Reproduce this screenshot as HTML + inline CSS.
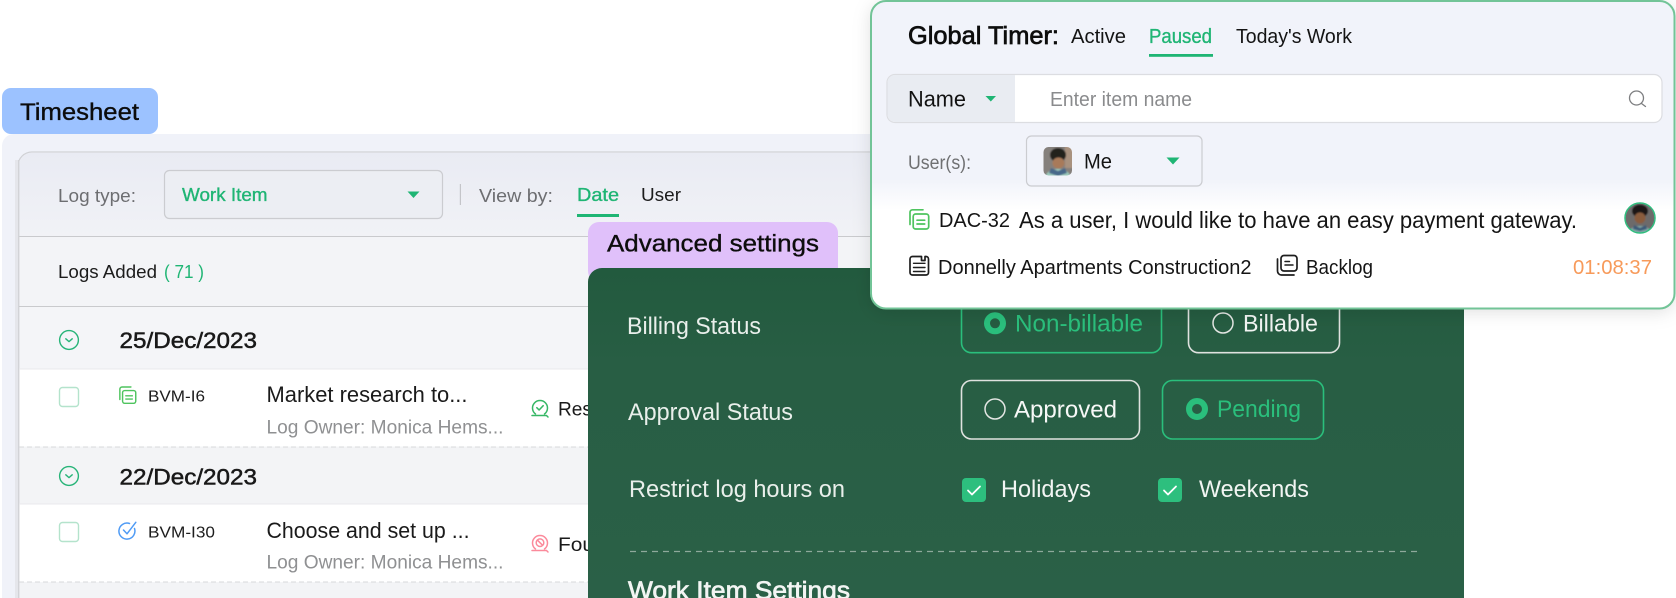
<!DOCTYPE html>
<html><head><meta charset="utf-8"><title>Timesheet</title>
<style>
html,body{margin:0;padding:0;background:#fff;width:1676px;height:598px;overflow:hidden}
svg{display:block}
text{font-family:"Liberation Sans",sans-serif;font-kerning:normal}
.m{stroke:currentColor;stroke-width:.35px}
.d{stroke:currentColor;stroke-width:.5px}
.b{stroke:currentColor;stroke-width:.7px}
</style></head><body>
<svg xmlns="http://www.w3.org/2000/svg" width="1676" height="598" viewBox="0 0 1676 598">
<defs>
<linearGradient id="hd" x1="0" y1="0" x2="0" y2="1"><stop offset="0" stop-color="#e9ebf3"/><stop offset="1" stop-color="#f1f2f6"/></linearGradient>
<linearGradient id="dk" x1="0" y1="0" x2="0" y2="1"><stop offset="0" stop-color="#225a3e"/><stop offset=".3" stop-color="#285e44"/><stop offset="1" stop-color="#2a6047"/></linearGradient>
<linearGradient id="tm" x1="0" y1="0" x2="0" y2="1"><stop offset="0" stop-color="#f1f3fa"/><stop offset=".58" stop-color="#f1f3fa"/><stop offset=".68" stop-color="#fff"/><stop offset="1" stop-color="#fff"/></linearGradient>
<filter id="sh" x="-5%" y="-10%" width="110%" height="125%"><feDropShadow dx="0" dy="3" stdDeviation="9" flood-color="#000" flood-opacity=".13"/></filter>
<filter id="bl"><feGaussianBlur stdDeviation=".7"/></filter>
<clipPath id="av1"><rect x="1043.500" y="147" width="28.500" height="28.500" rx="5"/></clipPath>
<clipPath id="av2"><circle cx="1640" cy="218" r="14.500"/></clipPath>
<g id="wi" fill="none" stroke="#4fc45f" stroke-width="1.700" stroke-linecap="round" stroke-linejoin="round"><rect x="4.200" y="5" width="15.500" height="15" rx="2.500"/><path d="M1 15.500V3.300A2.500 2.500 0 0 1 3.500 .8H14"/><path d="M8 11.200H15.700M8 15H15.700"/></g>
<g id="chev" fill="none" stroke="#27b478" stroke-width="1.400" stroke-linecap="round" stroke-linejoin="round"><circle cx="0" cy="0" r="9.400"/><path d="M-3.200-1.200 0 1.600 3.200-1.200"/></g>
</defs>

<rect width="1676" height="598" fill="#fff"/>

<!-- Timesheet card -->
<rect x="2" y="134" width="1400" height="500" rx="12" fill="#f0f2f9"/>
<rect x="18" y="152" width="1380" height="460" rx="14" fill="#f3f4f7" stroke="#d0d1d5" stroke-width="1.200"/>
<path d="M18.800 236.500V166a13.200 13.200 0 0 1 13.200-13.200H1390V236.500Z" fill="url(#hd)"/>
<path d="M18 236.500H1390" stroke="#c9cacd" stroke-width="1"/>
<rect x="15" y="160" width="3" height="438" fill="#e5e6eb"/>
<rect x="18" y="160" width="1.400" height="438" fill="#d2d3d7"/>
<text x="58" y="202" font-size="18.500" fill="#6d6e71" textLength="78" lengthAdjust="spacingAndGlyphs">Log type:</text>
<rect x="164.500" y="170.500" width="278" height="48" rx="5" fill="#eceef3" stroke="#cbccd0" stroke-width="1.200"/>
<text x="182" y="201" font-size="18" fill="#1fb574" class="m" style="color:#1fb574" textLength="85.500" lengthAdjust="spacingAndGlyphs">Work Item</text>
<path d="M407.500 191.500H419.500L413.500 198Z" fill="#1fb574"/>
<rect x="459.800" y="184" width="1.200" height="21" fill="#c4c5c9"/>
<text x="479" y="202" font-size="18.500" fill="#6d6e71" textLength="74" lengthAdjust="spacingAndGlyphs">View by:</text>
<text x="577" y="201" font-size="18.500" fill="#1fb574" class="m" style="color:#1fb574" textLength="42" lengthAdjust="spacingAndGlyphs">Date</text>
<rect x="577" y="214" width="42" height="3" fill="#1fb574"/>
<text x="641" y="201" font-size="18.500" fill="#1c1c1c" textLength="40" lengthAdjust="spacingAndGlyphs">User</text>

<text x="58" y="278" font-size="18.500" fill="#1c1c1c" textLength="99" lengthAdjust="spacingAndGlyphs">Logs Added</text>
<text x="164" y="278" font-size="18.500" fill="#1fb574" textLength="40" lengthAdjust="spacingAndGlyphs">( 71 )</text>
<path d="M19 306.500H1390" stroke="#c9cacd" stroke-width="1"/>
<rect x="19.500" y="307" width="1380" height="62" fill="#f4f5f8"/>
<path d="M19 369H1390" stroke="#e8e9ec"/>
<use href="#chev" x="69" y="340"/>
<text x="119.500" y="348" font-size="22.500" fill="#191919" class="d" style="color:#191919" textLength="137.500" lengthAdjust="spacingAndGlyphs">25/Dec/2023</text>

<rect x="19.500" y="369.500" width="1380" height="77" fill="#fff"/>
<rect x="59.500" y="387.500" width="19" height="19" rx="3" fill="#fff" stroke="#b4e3cc" stroke-width="1.400"/>
<use href="#wi" transform="translate(119 386.300) scale(.85)"/>
<text x="148" y="401.500" font-size="16" fill="#1c1c1c" textLength="57" lengthAdjust="spacingAndGlyphs">BVM-I6</text>
<text x="266.500" y="402" font-size="22" fill="#1a1a1a" textLength="201" lengthAdjust="spacingAndGlyphs">Market research to...</text>
<text x="266.500" y="433.500" font-size="19" fill="#8f9092" textLength="237" lengthAdjust="spacingAndGlyphs">Log Owner: Monica Hems...</text>
<g fill="none" stroke="#36b765" stroke-width="1.500" stroke-linecap="round" stroke-linejoin="round"><path d="M535.500 414A7.500 7.500 0 1 1 544.500 414"/><path d="M532 415.500H546.500L548 417"/><path d="M536.800 407.700l2.300 2.300 4.100-4.300"/></g>
<text x="558" y="415.500" font-size="19.500" fill="#1a1a1a" textLength="34" lengthAdjust="spacingAndGlyphs">Res</text>
<path d="M19 447H1390" stroke="#d7d8db" stroke-dasharray="5 3"/>

<rect x="19.500" y="447.500" width="1380" height="56.500" fill="#f3f4f6"/>
<use href="#chev" x="69" y="476"/>
<text x="119.500" y="484.500" font-size="22.500" fill="#191919" class="d" style="color:#191919" textLength="137.500" lengthAdjust="spacingAndGlyphs">22/Dec/2023</text>

<rect x="19.500" y="504" width="1380" height="78" fill="#fff"/>
<path d="M19 504H1390" stroke="#e8e9ec"/>
<rect x="59.500" y="522.500" width="19" height="19" rx="3" fill="#fff" stroke="#b4e3cc" stroke-width="1.400"/>
<g fill="none" stroke="#4f9bf5" stroke-width="1.500" stroke-linecap="round" stroke-linejoin="round"><path d="M134.500 528.500A8 8 0 1 1 129.500 523.500"/><path d="M123.500 530l3.500 3.800 8.800-11.500"/></g>
<text x="148" y="537.500" font-size="16" fill="#1c1c1c" textLength="67" lengthAdjust="spacingAndGlyphs">BVM-I30</text>
<text x="266.500" y="538" font-size="22" fill="#1a1a1a" textLength="203" lengthAdjust="spacingAndGlyphs">Choose and set up ...</text>
<text x="266.500" y="568.500" font-size="19" fill="#8f9092" textLength="237" lengthAdjust="spacingAndGlyphs">Log Owner: Monica Hems...</text>
<g fill="none" stroke="#fb8a9b" stroke-width="1.500" stroke-linecap="round"><path d="M535.500 549A7.500 7.500 0 1 1 544.500 549"/><circle cx="540" cy="542.700" r="3.800"/><path d="M537.500 540.200l5 5M532 550.500H546.500L548 552"/></g>
<text x="558" y="551" font-size="19.500" fill="#1a1a1a" textLength="36" lengthAdjust="spacingAndGlyphs">Fou</text>
<path d="M19 582H1390" stroke="#d7d8db" stroke-dasharray="5 3"/>
<rect x="19.500" y="582.500" width="1380" height="16" fill="#f3f4f6"/>

<!-- Timesheet tag -->
<path d="M11 88H149a9 9 0 0 1 9 9V125a9 9 0 0 1-9 9H11a9 9 0 0 1-9-9V97a9 9 0 0 1 9-9Z" fill="#9cc2ff"/>
<text x="20" y="120" font-size="24" fill="#0c0c0c" class="m" style="color:#0c0c0c" textLength="119" lengthAdjust="spacingAndGlyphs">Timesheet</text>

<!-- Advanced settings panel -->
<rect x="588" y="222" width="250" height="60" rx="11" fill="#e0c0fa"/>
<text x="607" y="251.500" font-size="24" fill="#0d0d0d" class="m" style="color:#0d0d0d" textLength="212" lengthAdjust="spacingAndGlyphs">Advanced settings</text>
<path d="M588 598V282a14 14 0 0 1 14-14H1450a14 14 0 0 1 14 14V598Z" fill="url(#dk)"/>
<g fill="#e9efeb">
<text x="627" y="334" font-size="24" textLength="134" lengthAdjust="spacingAndGlyphs">Billing Status</text>
<text x="628" y="420" font-size="24" textLength="165" lengthAdjust="spacingAndGlyphs">Approval Status</text>
<text x="629" y="497" font-size="24" textLength="216" lengthAdjust="spacingAndGlyphs">Restrict log hours on</text>
</g>
<path d="M630 551.500H1418" stroke="#8ea99b" stroke-width="1.300" stroke-dasharray="6 5"/>
<text x="628" y="599" font-size="25" fill="#f2f5f3" class="b" style="color:#f2f5f3" textLength="222" lengthAdjust="spacingAndGlyphs">Work Item Settings</text>

<rect x="961.500" y="294" width="200" height="58.700" rx="10" fill="none" stroke="#2abf7c" stroke-width="1.600"/>
<circle cx="995" cy="323.300" r="8" fill="none" stroke="#2abf7c" stroke-width="6"/>
<text x="1015" y="331.500" font-size="24" fill="#2abf7c" textLength="128" lengthAdjust="spacingAndGlyphs">Non-billable</text>
<rect x="1188.500" y="294" width="151" height="58.700" rx="10" fill="none" stroke="#dfe2df" stroke-width="1.600"/>
<circle cx="1223" cy="323" r="10" fill="none" stroke="#e3e6e3" stroke-width="1.500"/>
<text x="1243" y="331.500" font-size="24" fill="#f2f5f3" textLength="75" lengthAdjust="spacingAndGlyphs">Billable</text>

<rect x="961.500" y="380.500" width="178" height="58.500" rx="10" fill="none" stroke="#dfe2df" stroke-width="1.600"/>
<circle cx="995" cy="409" r="10" fill="none" stroke="#e3e6e3" stroke-width="1.500"/>
<text x="1014" y="417.500" font-size="24" fill="#f7f8f7" textLength="103" lengthAdjust="spacingAndGlyphs">Approved</text>
<rect x="1162.500" y="380.500" width="161" height="58.500" rx="10" fill="none" stroke="#2abf7c" stroke-width="1.600"/>
<circle cx="1197" cy="409" r="8" fill="none" stroke="#2abf7c" stroke-width="6"/>
<text x="1217" y="417" font-size="24" fill="#2abf7c" textLength="84" lengthAdjust="spacingAndGlyphs">Pending</text>

<rect x="962" y="478" width="24" height="24" rx="4" fill="#2dbf7e"/>
<path d="M968 490.500l4 4 8-8" fill="none" stroke="#fff" stroke-width="1.800" stroke-linecap="round" stroke-linejoin="round"/>
<text x="1001" y="497" font-size="24" fill="#f2f5f3" textLength="90" lengthAdjust="spacingAndGlyphs">Holidays</text>
<rect x="1158" y="478" width="24" height="24" rx="4" fill="#2dbf7e"/>
<path d="M1164 490.500l4 4 8-8" fill="none" stroke="#fff" stroke-width="1.800" stroke-linecap="round" stroke-linejoin="round"/>
<text x="1199" y="497" font-size="24" fill="#f2f5f3" textLength="110" lengthAdjust="spacingAndGlyphs">Weekends</text>

<!-- Global timer panel -->
<rect x="871" y="1" width="803.500" height="307.500" rx="15" fill="url(#tm)" filter="url(#sh)"/>
<rect x="871" y="1" width="803.500" height="307.500" rx="15" fill="url(#tm)" stroke="#72c497" stroke-width="2"/>
<text x="908" y="44" font-size="25" fill="#0d0d0d" class="b" style="color:#0d0d0d" textLength="151" lengthAdjust="spacingAndGlyphs">Global Timer:</text>
<text x="1071" y="43" font-size="20.500" fill="#141414" textLength="55" lengthAdjust="spacingAndGlyphs">Active</text>
<text x="1149" y="43" font-size="20.500" fill="#1fb574" class="m" style="color:#1fb574" textLength="63" lengthAdjust="spacingAndGlyphs">Paused</text>
<rect x="1149" y="54" width="64" height="2.800" fill="#1fb574"/>
<text x="1236" y="43" font-size="20.500" fill="#141414" textLength="116" lengthAdjust="spacingAndGlyphs">Today's Work</text>

<rect x="887" y="74.500" width="775" height="48" rx="8" fill="#fff" stroke="#dcdde1" stroke-width="1.200"/>
<path d="M895 75H1015V122H895a7.500 7.500 0 0 1-7.500-7.500V82.500A7.500 7.500 0 0 1 895 75Z" fill="#e9ecf2"/>
<text x="908" y="106.500" font-size="22" fill="#121212" textLength="58" lengthAdjust="spacingAndGlyphs">Name</text>
<path d="M985.500 96H996L990.800 101.500Z" fill="#1fb574"/>
<text x="1050" y="106" font-size="20.500" fill="#8a8b8d" textLength="142" lengthAdjust="spacingAndGlyphs">Enter item name</text>
<g fill="none" stroke="#7d7e80" stroke-width="1.300" stroke-linecap="round"><circle cx="1636.500" cy="98" r="7"/><path d="M1641.500 103.500l4 3"/></g>

<text x="908" y="169" font-size="19.500" fill="#6f7072" textLength="63" lengthAdjust="spacingAndGlyphs">User(s):</text>
<rect x="1026.500" y="136" width="175.500" height="50" rx="5" fill="#f1f3fa" stroke="#cbccd0" stroke-width="1.200"/>
<g clip-path="url(#av1)"><g filter="url(#bl)">
<rect x="1040" y="144" width="36" height="34" fill="#85807c"/>
<rect x="1065" y="144" width="10" height="24" fill="#a8917e"/>
<ellipse cx="1058" cy="155" rx="8" ry="7" fill="#23201f"/>
<ellipse cx="1058.500" cy="163" rx="6" ry="5.500" fill="#a87a5a"/>
<path d="M1045 178q2-9 13-9t13 9Z" fill="#9cc9bb"/>
<path d="M1051 168l7 3 7-3 2 5-9 3-9-3Z" fill="#47688a"/>
</g></g>
<text x="1084" y="168.500" font-size="21" fill="#141414" textLength="28" lengthAdjust="spacingAndGlyphs">Me</text>
<path d="M1166.500 157.500H1179.500L1173 164.500Z" fill="#1fb574"/>

<use href="#wi" transform="translate(909 209)"/>
<text x="939" y="227" font-size="20.500" fill="#141414" textLength="71" lengthAdjust="spacingAndGlyphs">DAC-32</text>
<text x="1019" y="228" font-size="23" fill="#141414" textLength="558" lengthAdjust="spacingAndGlyphs">As a user, I would like to have an easy payment gateway.</text>

<g fill="none" stroke="#1e1e1e" stroke-width="1.700" stroke-linejoin="round" stroke-linecap="round"><path d="M912.500 256.500H921.500V260.500H925V256.500H926a2.500 2.500 0 0 1 2.500 2.500V272.500A2.500 2.500 0 0 1 926 275H912.500a2.500 2.500 0 0 1-2.500-2.500V259A2.500 2.500 0 0 1 912.500 256.500Z"/><path d="M913.500 263.300H925M913.500 267.500H925M913.500 271.500H925" stroke-width="1.400"/></g>
<text x="938" y="274" font-size="20.500" fill="#141414" textLength="313.500" lengthAdjust="spacingAndGlyphs">Donnelly Apartments Construction2</text>
<g fill="none" stroke="#1e1e1e" stroke-width="1.700" stroke-linejoin="round" stroke-linecap="round"><rect x="1281" y="255.500" width="16" height="15.500" rx="3"/><path d="M1277.500 259V271A4 4 0 0 0 1281.500 275H1294"/><path d="M1285 261.500H1289.500M1285 265H1293" stroke-width="1.500"/></g>
<text x="1306" y="274" font-size="20.500" fill="#141414" textLength="67" lengthAdjust="spacingAndGlyphs">Backlog</text>

<g clip-path="url(#av2)"><g filter="url(#bl)">
<rect x="1622" y="200" width="36" height="36" fill="#6d6b6b"/>
<ellipse cx="1640" cy="211" rx="8" ry="6.500" fill="#1b1918"/>
<ellipse cx="1640" cy="218" rx="5.500" ry="5.500" fill="#8a5c3e"/>
<path d="M1627 236q2-10 13-10t13 10Z" fill="#7fa6a3"/>
<path d="M1634 225l6 3 6-3 1 4-7 2-7-2Z" fill="#3d5a78"/>
</g></g>
<circle cx="1640" cy="218" r="15" fill="none" stroke="#2fbd7e" stroke-width="1.500"/>
<text x="1573" y="274" font-size="20.500" fill="#f79a5a" textLength="79" lengthAdjust="spacingAndGlyphs">01:08:37</text>
</svg>
</body></html>
